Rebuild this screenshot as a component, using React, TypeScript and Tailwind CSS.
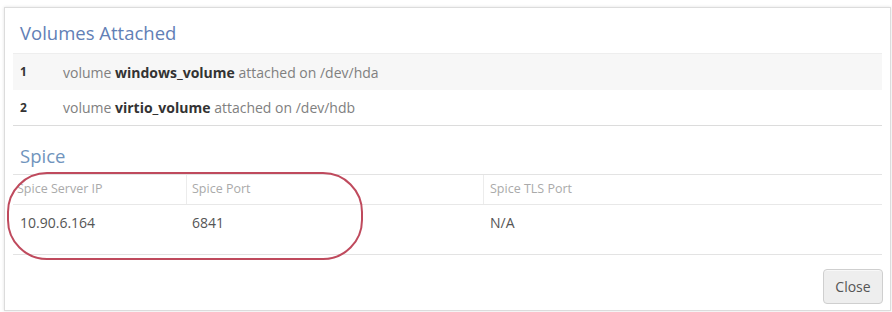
import React from "react";

export default function App() {
  return (
    <div
      className="relative w-[892px] h-[312px] bg-white overflow-hidden"
      style={{ fontFamily: '"Open Sans", "Noto Sans", sans-serif' }}
    >
      <div className="ml-[4px] mt-[7px] w-[887px] h-[304px] border border-[#dcdcdc] shadow-[0_0_3px_rgba(0,0,0,0.12)] px-[8px] pt-[12px]">
        <h2 className="pl-[7px] text-[18.5px] leading-[26px] text-[#6280b6]">Volumes Attached</h2>
        <div className="mt-[7px] border-b border-[#dcdcdc] text-[14px] text-[#808080]">
          <div className="flex items-center h-[37px] bg-[#f7f7f7] border-t border-[#eeeeee]">
            <span className="w-[50px] pl-[7px] font-bold text-[12px] text-[#333]">1</span>
            <span>
              volume <b className="text-[#333]">windows_volume</b> attached on /dev/hda
            </span>
          </div>
          <div className="flex items-center h-[35px]">
            <span className="w-[50px] pl-[7px] font-bold text-[12px] text-[#333]">2</span>
            <span>
              volume <b className="text-[#333]">virtio_volume</b> attached on /dev/hdb
            </span>
          </div>
        </div>
        <h2 className="mt-[17px] pl-[7px] text-[18.5px] leading-[26px] text-[#7094bd]">Spice</h2>
        <div className="mt-[5px] border-t border-b border-[#e3e3e3] text-[#666]">
          <div className="grid grid-cols-[174px_297px_1fr] h-[30px] border-b border-[#e8e8e8] text-[12.5px] text-[#aaa]">
            <div className="flex items-center pl-[4px] border-r border-[#ececec]">Spice Server IP</div>
            <div className="flex items-center pl-[5px] border-r border-[#ececec]">Spice Port</div>
            <div className="flex items-center pl-[6px]">Spice TLS Port</div>
          </div>
          <div className="grid grid-cols-[174px_297px_1fr] h-[49px] pt-[8px] text-[14px] leading-[20px] text-[#555]">
            <div className="pl-[7px]">10.90.6.164</div>
            <div className="pl-[5px]">6841</div>
            <div className="pl-[6px]">N/A</div>
          </div>
        </div>
        <div className="flex justify-end mt-[14px]">
          <button className="w-[60px] h-[35px] mr-[-1px] rounded-[4px] border border-[#cfcfcf] bg-[#eeeeee] text-[14px] text-[#555] shadow-[inset_0_1px_0_rgba(255,255,255,0.6)]">
            Close
          </button>
        </div>
      </div>
      <div className="absolute left-[7px] top-[172px] w-[356px] h-[88px] rounded-[40px] border-2 border-[#bf4a5d]" />
    </div>
  );
}
